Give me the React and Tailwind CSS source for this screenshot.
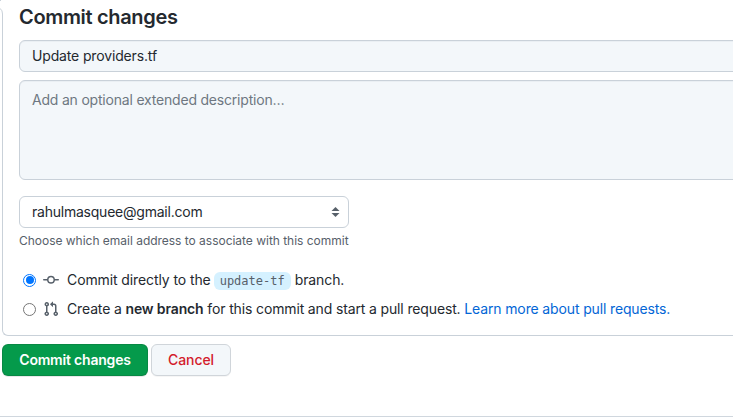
function CommitIcon() {
  return (
    <svg className="h-4 w-4 shrink-0 fill-[#57606a]" viewBox="0 0 16 16">
      <path fillRule="evenodd" d="M10.5 7.75a2.5 2.5 0 11-5 0 2.5 2.5 0 015 0zm1.43.75a4.002 4.002 0 01-7.86 0H.75a.75.75 0 110-1.5h3.32a4.001 4.001 0 017.86 0h3.32a.75.75 0 110 1.5h-3.32z" />
    </svg>
  );
}

function PullRequestIcon() {
  return (
    <svg className="h-4 w-4 shrink-0 fill-[#57606a]" viewBox="0 0 16 16">
      <path fillRule="evenodd" d="M7.177 3.073L9.573.677A.25.25 0 0110 .854v4.792a.25.25 0 01-.427.177L7.177 3.427a.25.25 0 010-.354zM3.75 2.5a.75.75 0 100 1.5.75.75 0 000-1.5zm-2.25.75a2.25 2.25 0 113 2.122v5.256a2.251 2.251 0 11-1.5 0V5.372A2.25 2.25 0 011.5 3.25zM11 2.5h-1V4h1a1 1 0 011 1v5.628a2.251 2.251 0 101.5 0V5A2.5 2.5 0 0011 2.5zm1 10.25a.75.75 0 111.5 0 .75.75 0 01-1.5 0zM3.75 12a.75.75 0 100 1.5.75.75 0 000-1.5z" />
    </svg>
  );
}

function Radio({ checked }) {
  return (
    <span className={checked ? "mb-px flex h-[13px] w-[13px] shrink-0 items-center justify-center rounded-full border border-[#0075ff] bg-white" : "mb-px h-[13px] w-[13px] shrink-0 rounded-full border border-[#767676] bg-white"}>
      {checked && <span className="h-[8px] w-[8px] rounded-full bg-[#0075ff]" />}
    </span>
  );
}

export default function App() {
  return (
    <div className="relative h-[420px] w-[733px] overflow-hidden bg-white font-['Inter','Liberation_Sans',sans-serif] text-sm whitespace-nowrap text-[#24292f]">
      <section className="ml-[2px] h-[336px] w-[760px] rounded-bl-md border-b border-l border-[#c9d1d9] pl-4">
        <h3 className="h-[40px] pt-[3px] text-[20px] leading-[28px] font-semibold tracking-[-0.33px]">Commit changes</h3>
        <div className="h-8 rounded-md border border-[#c9d1d9] bg-[#f3f7fa] px-3 leading-[29px] shadow-[inset_0_1px_0_rgba(208,215,222,0.25)]">
          <span className="tracking-[-0.15px]">Update providers.tf</span>
        </div>
        <div className="mt-2 h-[100px] rounded-md border border-[#c9d1d9] bg-[#f3f7fa] px-3 pt-[9px] leading-5 text-[#6e7781] shadow-[inset_0_1px_0_rgba(208,215,222,0.25)]">
          <span className="tracking-[-0.2px]">Add an optional extended description…</span>
        </div>
        <div className="mt-4 flex h-8 w-[330px] items-center justify-between rounded-md border border-[#c9d1d9] pr-[8px] pl-3">
          <span className="tracking-[-0.23px]">rahulmasquee@gmail.com</span>
          <svg className="h-[10px] w-[9px] fill-[#57606a]" viewBox="0 0 9 10">
            <path d="M4.5 0 8.5 4H.5zM.5 6h8l-4 4z" />
          </svg>
        </div>
        <p className="mt-1 h-[18px] text-[12px] leading-[18px] text-[#57606a]"><span className="tracking-[-0.02px]">Choose which email address to associate with this commit</span></p>
        <div className="mt-5 flex h-[21px] items-center pl-1">
          <Radio checked />
          <span className="ml-[7px] flex pb-px"><CommitIcon /></span>
          <span className="ml-2 flex items-center">
            <span className="pb-[2px] tracking-[-0.1px]">Commit directly to the</span>
            <code className="ml-[3px] flex h-[18px] w-[77px] items-center justify-center rounded-md bg-[#d5f1ff] font-['DejaVu_Sans_Mono',monospace] text-[12px] leading-4 tracking-[0px] text-[#57606a]">update-tf</code>
            <span className="ml-1 pb-[2px] tracking-[-0.1px]">branch.</span>
          </span>
        </div>
        <div className="mt-[8px] flex h-[21px] items-center pl-1">
          <Radio />
          <span className="ml-[7px] flex pb-px"><PullRequestIcon /></span>
          <span className="ml-2 pb-[2px] tracking-[-0.14px]">Create a <b className="font-semibold">new branch</b> for this commit and start a pull request. <a className="text-[#0366d6]">Learn more about pull requests.</a></span>
        </div>
      </section>
      <div className="mt-2 ml-[2px] flex h-8 gap-[3px] font-medium">
        <button className="w-[146px] rounded-md border border-[#1b1f2426] bg-[#059a4b] font-semibold text-white shadow-[0_1px_0_rgba(27,31,36,0.1)]"><span className="tracking-[-0.2px]">Commit changes</span></button>
        <button className="w-[80px] rounded-md border border-[#d0d5da] bg-[#f3f7fa] text-[#d31c2c] shadow-[0_1px_0_rgba(27,31,36,0.04)]"><span className="tracking-[-0.1px]">Cancel</span></button>
      </div>
      <div className="mt-10 h-px bg-[#d0d7de]" />
      <svg className="absolute top-0 left-0 h-[14px] w-[4px]" viewBox="0 0 4 14">
        <path d="M0 0h4v14H0z" fill="#fff" />
        <path d="M0 8.6Q2.5 9.5 2.5 14M0 .5H1" fill="none" stroke="#c9d1d9" />
      </svg>
    </div>
  );
}
